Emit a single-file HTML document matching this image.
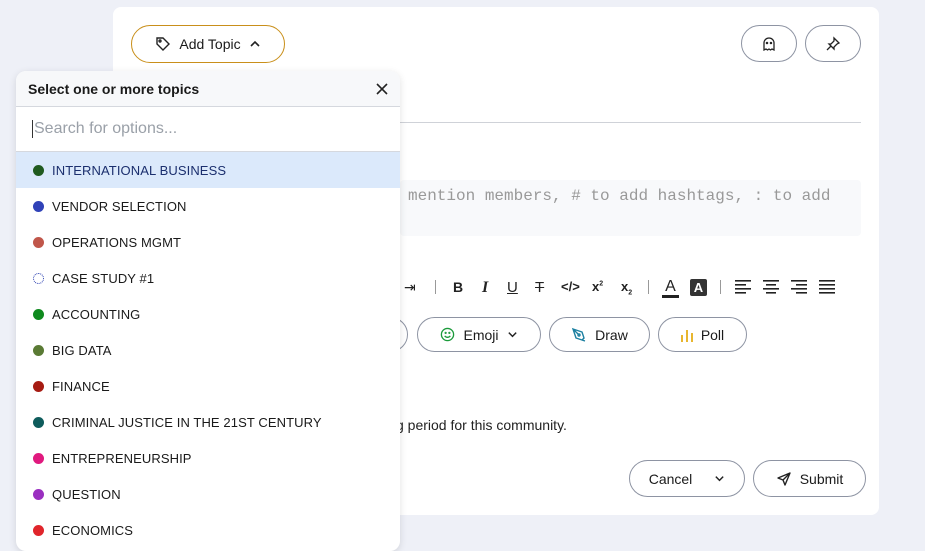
<!DOCTYPE html>
<html><head><meta charset="utf-8"><style>
*{box-sizing:border-box;margin:0;padding:0}
body{width:925px;height:541px;background:#eef0f7;font-family:"Liberation Sans",sans-serif;position:relative;overflow:hidden;color:#1a1a1a}
.card{position:absolute;left:113px;top:7px;width:766px;height:508px;background:#fff;border-radius:8px}
.pill{position:absolute;border:1px solid #8e94a3;border-radius:20px;background:#fff;display:flex;align-items:center;justify-content:center;font-size:14px;color:#1a1a1a;gap:8px}
.dd{position:absolute;left:16px;top:71px;width:384px;height:480px;background:#fff;border-radius:10px;box-shadow:0 2px 8px rgba(0,0,0,.12);overflow:hidden}
.hd{height:36px;background:#f7f8fa;border-bottom:1px solid #d5d8de;display:flex;align-items:center;padding:0 12px;font-size:14px;font-weight:bold;color:#1a1a1a;justify-content:space-between}
.sr{height:45px;border-bottom:1px solid #d5d8de;display:flex;align-items:center;padding-left:16px;font-size:16px;color:#9aa0a8}
.it{height:36px;display:flex;align-items:center;padding-left:17px;font-size:13px;color:#1a1a1a;letter-spacing:.1px}
.it i{width:11px;height:11px;border-radius:50%;display:inline-block;margin-right:8px}
.tb{position:absolute;top:279px;font-size:14px;font-weight:bold;color:#222}
.sep{position:absolute;top:280px;width:1px;height:14px;background:#999}
</style></head><body>
<div class="card"></div>
<div class="pill" style="left:131px;top:25px;width:154px;height:38px;border-color:#c98f1a;font-size:14px">
<svg width="16" height="16" viewBox="0 0 16 16" fill="none" stroke="#222" stroke-width="1.4"><path d="M2 2h6l6 6-6 6-6-6z"/><circle cx="5" cy="5" r="1"/></svg>Add Topic
<svg width="12" height="12" viewBox="0 0 12 12" fill="none" stroke="#222" stroke-width="1.6"><path d="M2 8l4-4 4 4"/></svg></div>
<div class="pill" style="left:741px;top:25px;width:56px;height:37px"><svg width="14" height="16" viewBox="0 0 14 16" fill="none" stroke="#222" stroke-width="1.3"><path d="M2 14V7a5 5 0 0110 0v7l-2-1-1.5 1-1.5-1-1.5 1-1.5-1z"/><circle cx="5" cy="7" r=".6" fill="#222"/><circle cx="9" cy="7" r=".6" fill="#222"/></svg></div>
<div class="pill" style="left:805px;top:25px;width:56px;height:37px"><svg width="16" height="16" viewBox="0 0 16 16" fill="none" stroke="#222" stroke-width="1.3"><path d="M9 2l5 5-2 1-3 3 0 2-5-5 2 0 3-3z M6 10l-4 4"/></svg></div>
<div style="position:absolute;left:400px;top:122px;width:461px;height:1px;background:#cfd2d8"></div>
<div style="position:absolute;left:400px;top:180px;width:461px;height:56px;background:#f8f9fb;border-radius:4px"></div>
<div style="position:absolute;left:408px;top:187px;font-family:'Liberation Mono',monospace;font-size:16px;color:#999">mention members, # to add hashtags, : to add</div>
<div class="tb" style="left:404px;font-weight:normal">⇥</div>
<div class="sep" style="left:435px"></div>
<div class="tb" style="left:453px">B</div>
<div class="tb" style="left:482px;font-style:italic;font-family:'Liberation Serif',serif;font-size:16px">I</div>
<div class="tb" style="left:507px;text-decoration:underline;font-weight:normal;font-size:15px">U</div>
<div class="tb" style="left:535px;text-decoration:line-through;font-weight:normal;font-size:15px">T</div>
<div class="tb" style="left:561px;font-size:13px">&lt;/&gt;</div>
<div class="tb" style="left:592px;font-size:13px">x<sup style="font-size:7px">2</sup></div>
<div class="tb" style="left:621px;font-size:13px">x<sub style="font-size:7px">2</sub></div>
<div class="sep" style="left:648px"></div>
<div class="tb" style="left:662px;font-weight:normal;font-size:16px;border-bottom:3px solid #222;line-height:16px;width:17px;text-align:center">A</div>
<div class="tb" style="left:690px;top:279px;width:17px;height:17px;background:#333;color:#fff;font-size:13px;text-align:center;line-height:17px;border-radius:2px">A</div>
<div class="sep" style="left:720px"></div>
<svg style="position:absolute;left:735px;top:280px" width="100" height="15" fill="#222"><g><rect x="0" y="0" width="16" height="1.6"/><rect x="0" y="4" width="11" height="1.6"/><rect x="0" y="8" width="16" height="1.6"/><rect x="0" y="12" width="11" height="1.6"/></g><g transform="translate(28,0)"><rect x="0" y="0" width="16" height="1.6"/><rect x="3" y="4" width="10" height="1.6"/><rect x="0" y="8" width="16" height="1.6"/><rect x="3" y="12" width="10" height="1.6"/></g><g transform="translate(56,0)"><rect x="0" y="0" width="16" height="1.6"/><rect x="5" y="4" width="11" height="1.6"/><rect x="0" y="8" width="16" height="1.6"/><rect x="5" y="12" width="11" height="1.6"/></g><g transform="translate(84,0)"><rect x="0" y="0" width="16" height="1.6"/><rect x="0" y="4" width="16" height="1.6"/><rect x="0" y="8" width="16" height="1.6"/><rect x="0" y="12" width="16" height="1.6"/></g></svg>
<div class="pill" style="left:340px;top:317px;width:68px;height:35px"></div>
<div class="pill" style="left:417px;top:317px;width:124px;height:35px"><svg width="15" height="15" viewBox="0 0 16 16" fill="none" stroke="#1a9a3a" stroke-width="1.4"><circle cx="8" cy="8" r="6.5"/><path d="M5 9.5c1.5 2 4.5 2 6 0"/><circle cx="6" cy="6.3" r=".5"/><circle cx="10" cy="6.3" r=".5"/></svg>Emoji<svg width="11" height="11" viewBox="0 0 12 12" fill="none" stroke="#222" stroke-width="1.6"><path d="M2 4l4 4 4-4"/></svg></div>
<div class="pill" style="left:549px;top:317px;width:101px;height:35px"><svg width="16" height="16" viewBox="0 0 16 16" fill="none" stroke="#1a7fa0" stroke-width="1.4"><path d="M2 2l9 3 2 6-2 2-6-2z M2 2l5 5 M11 13l3 1"/><circle cx="8" cy="8" r="1"/></svg>Draw</div>
<div class="pill" style="left:658px;top:317px;width:89px;height:35px"><svg width="12" height="14" fill="#e8b630"><rect x="0" y="7" width="2" height="7"/><rect x="5" y="2" width="2" height="12"/><rect x="10" y="5" width="2" height="9"/></svg>Poll</div>
<div style="position:absolute;left:396px;top:417px;font-size:14px;color:#222">g period for this community.</div>
<div class="pill" style="left:629px;top:460px;width:116px;height:37px;gap:22px">Cancel<svg width="11" height="11" viewBox="0 0 12 12" fill="none" stroke="#222" stroke-width="1.6"><path d="M2 4l4 4 4-4"/></svg></div>
<div class="pill" style="left:753px;top:460px;width:113px;height:37px"><svg width="16" height="16" viewBox="0 0 16 16" fill="none" stroke="#222" stroke-width="1.4" stroke-linejoin="round"><path d="M14 2L2 7l5 2 2 5z M7 9l7-7"/></svg>Submit</div>
<div class="dd">
<div class="hd">Select one or more topics<svg width="12" height="12" viewBox="0 0 12 12" stroke="#222" stroke-width="1.6"><path d="M1 1l10 10M11 1L1 11"/></svg></div>
<div class="sr"><span style="display:inline-block;width:1px;height:18px;background:#333;margin-right:1px"></span>Search for options...</div>
<div class="it" style="background:#dbe9fb;color:#1b2f6e"><i style="background:#1f5a1f"></i>INTERNATIONAL BUSINESS</div>
<div class="it"><i style="background:#3042b8"></i>VENDOR SELECTION</div>
<div class="it"><i style="background:#c0564a"></i>OPERATIONS MGMT</div>
<div class="it"><i style="border:1.5px dotted #2a3fb0"></i>CASE STUDY #1</div>
<div class="it"><i style="background:#0f8a1e"></i>ACCOUNTING</div>
<div class="it"><i style="background:#5a7a34"></i>BIG DATA</div>
<div class="it"><i style="background:#a61b12"></i>FINANCE</div>
<div class="it"><i style="background:#0e5c5c"></i>CRIMINAL JUSTICE IN THE 21ST CENTURY</div>
<div class="it"><i style="background:#e0197e"></i>ENTREPRENEURSHIP</div>
<div class="it"><i style="background:#9a2fc0"></i>QUESTION</div>
<div class="it"><i style="background:#e0252b"></i>ECONOMICS</div>
</div>
</body></html>
